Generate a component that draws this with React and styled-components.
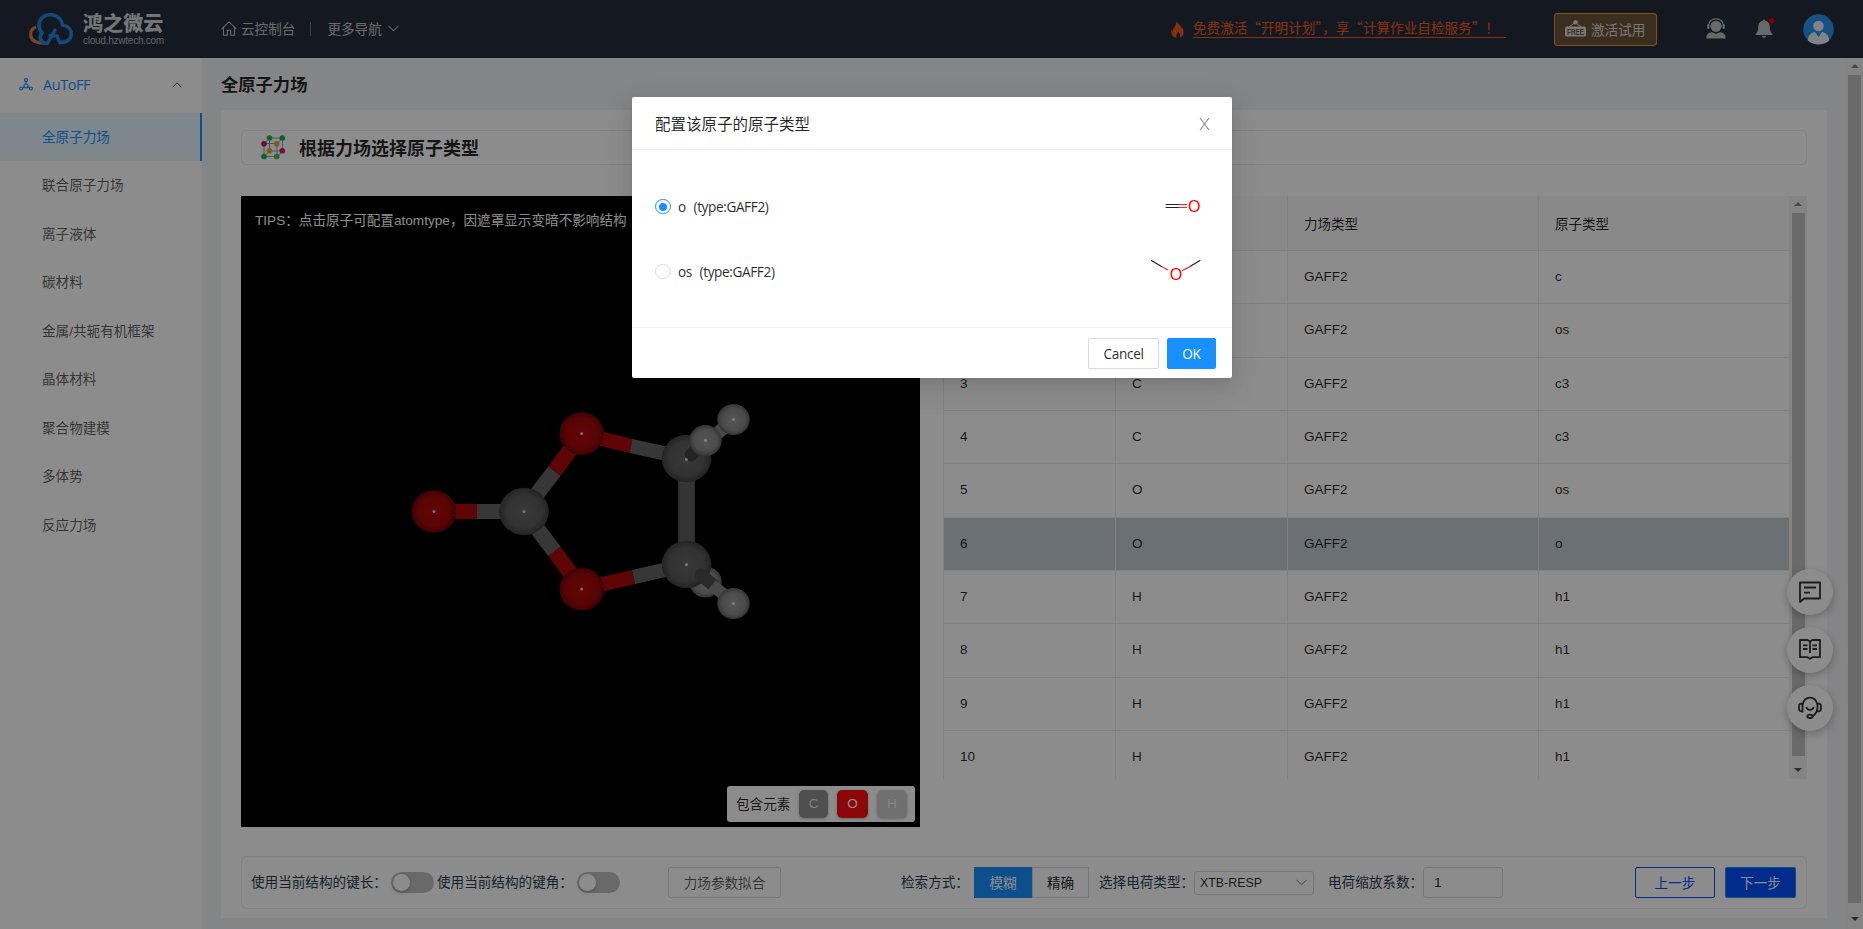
import React from "react";
import styled, { createGlobalStyle, css } from "styled-components";

const sans = `"Liberation Sans", "Noto Sans CJK SC", sans-serif`;
const humanist = `"Open Sans", "Noto Sans CJK SC", sans-serif`;

const GlobalStyle = createGlobalStyle`
  *, *::before, *::after { box-sizing: border-box; }
  html, body { margin: 0; padding: 0; overflow: hidden; }
  body { font-family: ${sans}; font-size: 13.6px; color: rgba(0, 0, 0, 0.85); background: #f0f2f5; }
  svg { display: block; flex: none; }
  button { font-family: inherit; }
`;

const Page = styled.div`
  position: relative;
  width: 1863px;
  height: 929px;
  display: flex;
  flex-direction: column;
  overflow: hidden;
  white-space: nowrap;
`;

/* ---------- header ---------- */
const Header = styled.header`
  flex: none;
  height: 58px;
  background: #262f3c;
  display: flex;
  align-items: center;
  padding: 0 29px 0 28px;
  color: #c4c6c8;
  font-family: ${humanist};
`;
const Brand = styled.div`
  display: flex;
  align-items: center;
  gap: 8px;
  width: 193px;
`;
const BrandText = styled.div`
  display: flex;
  flex-direction: column;
  padding-top: 1px;
`;
const BrandName = styled.span`
  font: 900 20px/22px "Noto Sans CJK SC", sans-serif;
  letter-spacing: 0.1px;
  color: #d4d6d8;
`;
const BrandUrl = styled.span`
  font: 10.2px/13px "Liberation Sans", sans-serif;
  letter-spacing: -0.33px;
  color: #b0b3b8;
`;
const NavLink = styled.a`
  display: flex;
  align-items: center;
  gap: ${(p) => p.$gap}px;
  line-height: 20px;
  padding-bottom: 1px;
  color: #c0c2c5;
`;
const NavDivider = styled.i`
  width: 1px;
  height: 14px;
  margin: 0 16px 0 15px;
  background: #6f767f;
`;
const Spacer = styled.div`
  flex: 1;
`;
const Promo = styled.a`
  display: flex;
  align-items: center;
  gap: 9px;
  margin-right: 48px;
  color: #f2581c;
`;
const PromoText = styled.span`
  width: 313px;
  height: 21px;
  font: 13.6px/20px "Noto Sans CJK SC", sans-serif;
  border-bottom: 1px solid #f2581c;
  margin-bottom: 8px;
  margin-top: 5px;
`;
const TrialButton = styled.button`
  display: flex;
  align-items: center;
  gap: 5px;
  width: 103px;
  height: 33px;
  padding: 0 10px 1px;
  border: 1px solid #f29423;
  border-radius: 3px;
  background: #6b553c;
  color: #dcd9d4;
  font-size: 13.6px;
  margin-right: 49px;
`;
const HeaderIcon = styled.div`
  margin-right: ${(p) => p.$gap || 0}px;
  padding-bottom: 1px;
`;

/* ---------- layout ---------- */
const Body = styled.div`
  flex: 1;
  display: flex;
  min-height: 0;
`;
const Sidebar = styled.aside`
  width: 202px;
  flex: none;
  background: #fff;
`;
const MenuTitle = styled.div`
  height: 55px;
  display: flex;
  align-items: center;
  padding: 0 20px 2px 19px;
  color: #1890ff;
  font: 14.4px ${humanist};
  span { flex: 1; padding-left: 10px; letter-spacing: -0.4px; }
`;
const MenuItem = styled.div`
  height: 48px;
  margin-bottom: 0.5px;
  padding: 0 0 3px 42px;
  display: flex;
  align-items: center;
  color: rgba(0, 0, 0, 0.65);
  ${(p) =>
    p.$active &&
    css`
      color: #1890ff;
      background: #e6f7ff;
      border-right: 2px solid #1890ff;
    `}
`;
const Main = styled.main`
  flex: 1;
  padding: 0 19px 0 19px;
`;
const PageTitle = styled.h1`
  margin: 0;
  height: 52px;
  font-size: 17.3px;
  line-height: 55px;
  font-weight: 700;
`;
const Card = styled.section`
  height: 808px;
  background: #fff;
  padding: 20px;
`;
const StepBar = styled.div`
  height: 35px;
  border: 1px solid #ebebeb;
  border-radius: 5px;
  display: flex;
  align-items: center;
  padding-left: 19px;
  gap: 14px;
  font-size: 18px;
  font-weight: 700;
  span { padding-bottom: 2px; }
`;
const Workspace = styled.div`
  margin-top: 31px;
  display: flex;
  gap: 23px;
  height: 631px;
`;
const Viewer = styled.div`
  position: relative;
  width: 679px;
  background: #000;
`;
const Tip = styled.div`
  padding: 14px 14px 0;
  line-height: 22px;
  color: #fff;
`;
const MoleculeSvg = styled.svg`
  position: absolute;
  left: 0;
  top: 0;
`;
const Legend = styled.div`
  position: absolute;
  right: 5px;
  bottom: 5px;
  width: 188px;
  height: 36px;
  border-radius: 3px;
  background: #fff;
  padding: 0 8px 0 9px;
  display: flex;
  align-items: center;
  justify-content: space-between;
`;
const LegendTitle = styled.span`
  padding-bottom: 2px;
`;
const Chip = styled.span`
  width: ${(p) => p.$w}px;
  height: 28px;
  padding-bottom: 2px;
  border-radius: 5px;
  background: ${(p) => p.$bg};
  color: ${(p) => p.$fg};
  box-shadow: 0 1px 3px rgba(0, 0, 0, 0.25);
  display: flex;
  align-items: center;
  justify-content: center;
`;

/* ---------- table ---------- */
const TableArea = styled.div`
  width: 864px;
  height: 583px;
  display: flex;
  overflow: hidden;
`;
const Table = styled.div`
  width: 846px;
  flex: none;
`;
const Row = styled.div`
  display: grid;
  grid-template-columns: 172px 172px 251px 251px;
  height: ${(p) => (p.$head ? 55 : 53.33)}px;
  background: ${(p) => (p.$head ? "#fafafa" : p.$selected ? "#c3ccd6" : "#fff")};
`;
const Cell = styled.div`
  padding: 0 16px 1px;
  display: flex;
  align-items: center;
  font-size: 13.5px;
  border-left: 1px solid #ececec;
  border-bottom: 1px solid #ececec;
`;
const Scrollbar = styled.div`
  flex: none;
  width: ${(p) => p.$w}px;
  background: #f1f1f1;
  display: flex;
  flex-direction: column;
  align-items: center;
  padding: 6px 0;
`;
const Thumb = styled.div`
  width: 13px;
  height: ${(p) => p.$h}px;
  margin: ${(p) => p.$m};
  background: #c1c1c1;
`;
const Arrow = styled.i`
  border: 4px solid transparent;
  ${(p) =>
    p.$up
      ? css`border-top: 0; border-bottom: 4px solid #858585;`
      : css`border-bottom: 0; border-top: 4px solid #505050;`}
`;

/* ---------- bottom bar ---------- */
const ActionBar = styled.div`
  margin-top: 29px;
  height: 53px;
  border: 1px solid #ebebeb;
  border-radius: 6px;
  display: flex;
  align-items: center;
  padding: 0 10px 0 9px;
`;
const Label = styled.span`
  width: ${(p) => p.$w}px;
  color: #2c3e50;
  padding-bottom: 3px;
`;
const Switch = styled.span`
  width: 43px;
  height: 21px;
  border-radius: 11px;
  background: rgba(0, 0, 0, 0.25);
  padding: 2px;
  margin: 0 ${(p) => p.$mr}px 0 0;
  &::before {
    content: "";
    display: block;
    width: 17px;
    height: 17px;
    border-radius: 50%;
    background: #fff;
    box-shadow: 0 2px 4px rgba(0, 35, 11, 0.2);
  }
`;
const Button = styled.button`
  width: ${(p) => p.$w}px;
  height: 31px;
  padding: 0 0 2px;
  font-size: 13.6px;
  border: 1px solid ${(p) => p.$border || "#d9d9d9"};
  border-radius: ${(p) => p.$radius ?? 2}px;
  background: ${(p) => p.$bg || "#fff"};
  color: ${(p) => p.$fg || "rgba(0,0,0,.85)"};
  margin-right: ${(p) => p.$mr || 0}px;
`;
const Select = styled.div`
  width: 120px;
  height: 24px;
  border: 1px solid #d9d9d9;
  border-radius: 3px;
  padding: 0 6px 0 5px;
  display: flex;
  align-items: center;
  justify-content: space-between;
  font-size: 12.4px;
  margin-right: 14px;
`;
const NumberField = styled.div`
  width: 80px;
  height: 31px;
  border: 1px solid #d9d9d9;
  border-radius: 3px;
  padding-left: 10px;
  display: flex;
  align-items: center;
`;

/* ---------- floating buttons ---------- */
const FloatStack = styled.div`
  position: absolute;
  left: 1787px;
  top: 569px;
  display: flex;
  flex-direction: column;
  gap: 12px;
`;
const FloatButton = styled.div`
  width: 46px;
  height: 46px;
  border-radius: 50%;
  background: #fff;
  box-shadow: 0 3px 9px rgba(0, 0, 0, 0.25);
  display: flex;
  align-items: center;
  justify-content: center;
`;

/* ---------- dialog ---------- */
const Mask = styled.div`
  position: absolute;
  inset: 0;
  background: rgba(0, 0, 0, 0.45);
  display: flex;
  justify-content: center;
  align-items: flex-start;
  padding: 97px 0 0 1px;
`;
const Dialog = styled.div`
  width: 600px;
  height: 281px;
  background: #fff;
  border-radius: 2px;
  box-shadow: 0 3px 6px -4px rgba(0, 0, 0, 0.12), 0 6px 16px rgba(0, 0, 0, 0.08),
    0 9px 28px 8px rgba(0, 0, 0, 0.05);
  display: flex;
  flex-direction: column;
  font-family: ${humanist};
`;
const DialogHead = styled.div`
  height: 53px;
  border-bottom: 1px solid #f0f0f0;
  padding: 1px 22px 0 23px;
  display: flex;
  align-items: center;
  justify-content: space-between;
  font-size: 15.5px;
`;
const DialogBody = styled.div`
  flex: 1;
  padding: 24px 30px 0 23px;
`;
const Option = styled.div`
  height: 65px;
  display: flex;
  align-items: center;
`;
const Radio = styled.span`
  width: 15.5px;
  height: 15.5px;
  border-radius: 50%;
  border: 1px solid ${(p) => (p.$on ? "#1890ff" : "#d9d9d9")};
  display: flex;
  align-items: center;
  justify-content: center;
  margin-right: 7.5px;
  &::after {
    content: "";
    width: 8px;
    height: 8px;
    border-radius: 50%;
    background: ${(p) => (p.$on ? "#1890ff" : "transparent")};
  }
`;
const OptionText = styled.span`
  flex: 1;
  white-space: pre;
  letter-spacing: -0.38px;
  word-spacing: 0.7px;
`;
const DialogFoot = styled.div`
  height: 51px;
  border-top: 1px solid #f0f0f0;
  display: flex;
  align-items: center;
  justify-content: flex-end;
  gap: 8px;
  padding: 0 16px 0 0;
  button { padding: 0; letter-spacing: -0.3px; }
`;

/* ---------- drawings ---------- */
const Chevron = ({ up, size = 10, color }) => (
  <svg width={size} height={size * 0.6} viewBox="0 0 10 6" fill="none" stroke={color} strokeWidth="1">
    <path d={up ? "M.5 5.3 5 .8 9.5 5.3" : "M.5.7 5 5.2 9.5.7"} />
  </svg>
);
const Logo = () => (
  <svg width="47" height="34" viewBox="0 0 47 34" fill="none">
    <path d="M8 15C4 16.500 2.300 20 2.700 23.500 3.400 28 7 31 15.500 31" stroke="#e3793a" strokeWidth="3.200" />
    <path d="M20 31.300H16.500C12 29 10.800 24.500 14 21 9.500 15 10.500 9 14.500 5.500 19 1.500 27 2 31 6 33 8 34.200 10.500 34.500 13 40.500 14 43.500 18 43.200 22.500 42.500 28 38 31 31.500 30.300" stroke="#2586e4" strokeWidth="3.600" />
    <path d="M27.800 17 18.800 32.500M20.500 23.800H29L32.500 32" stroke="#2586e4" strokeWidth="3.200" />
  </svg>
);
const Home = () => (
  <svg width="16" height="15" viewBox="0 0 16 15" fill="none" stroke="#c0c2c5" strokeWidth="1.100">
    <path d="M.7 7.800 8 .9l7.300 6.900M2.500 6.500v7.800h3.800V9.200h3.400v5.100h3.800V6.500" />
  </svg>
);
const Flame = () => (
  <svg width="13" height="17" viewBox="0 0 13 17">
    <path fill="#f2581c" d="M5.500 0c1.200 3 5.200 4.500 5.400 8l.9-1.400c1.600 4.600 1 8.800-3.300 10.400 1.400-2.600.6-4.800-1.400-6.800-.1 2-2.500 3.200-1.700 6.900C1.300 16-.4 12 .6 8.600l1.300 1.600C1.700 6 6 5 5.500 0Z" />
  </svg>
);
const FreeSign = () => (
  <svg width="21" height="17" viewBox="0 0 21 17">
    <circle cx="10.500" cy="2.300" r="2.200" fill="#dcd9d4" />
    <path d="M4 7l6-4.500L16.500 7" stroke="#dcd9d4" fill="none" />
    <rect x="0" y="6.500" width="21" height="10" rx="1.500" fill="#dcd9d4" />
    <text x="10.500" y="14.700" textAnchor="middle" textLength="17" lengthAdjust="spacingAndGlyphs" fontFamily="Liberation Sans" fontWeight="700" fontSize="8.500" fill="#6b553c">FREE</text>
  </svg>
);
const Agent = () => (
  <svg width="20" height="21" viewBox="0 0 20 21" fill="#bcc0c2">
    <circle cx="10" cy="8.300" r="5.600" />
    <path d="M2.600 9V7.500C3 3 6 .9 10 .9s7 2.100 7.400 6.600V9" fill="none" stroke="#bcc0c2" strokeWidth="1.100" />
    <rect x="1.200" y="6" width="2.200" height="5" rx="1.100" /><rect x="16.600" y="6" width="2.200" height="5" rx="1.100" />
    <path d="M.3 20.500c0-4 2-5.700 5.500-6.200l4.200 1.400 4.200-1.400c3.500.5 5.500 2.200 5.500 6.200z" />
  </svg>
);
const Bell = () => (
  <svg width="22" height="21" viewBox="0 0 22 21">
    <path fill="#bcc0c2" d="M8 2.500c.3-1.500 1.700-1.500 2 0 3.400.9 4.800 3.500 4.800 6.500 0 3.500.7 5 2.700 7.300v.7H.5v-.7C2.500 14 3.200 12.500 3.200 9c0-3 1.400-5.600 4.800-6.500ZM6.800 18h4.400c-.4 2.200-4 2.200-4.400 0Z" />
    <circle cx="16.700" cy="3" r="2.700" fill="#f00000" />
  </svg>
);
const Avatar = () => (
  <svg width="31" height="31" viewBox="0 0 31 31">
    <circle cx="15.500" cy="15.500" r="15.200" fill="#2b93ee" />
    <circle cx="15.500" cy="12" r="5.300" fill="#e8eef4" />
    <path d="M4.800 26.500c.3-5 2.700-7.500 7.200-8.800l3.500 5.500 3.500-5.500c4.500 1.300 6.900 3.800 7.200 8.800-5.500 5-15.900 5-21.400 0Z" fill="#e8eef4" />
  </svg>
);
const Tripod = () => (
  <svg width="14" height="13" viewBox="0 0 14 13" fill="none" stroke="#1890ff" strokeWidth="1.200">
    <circle cx="7" cy="2.200" r="1.500" /><circle cx="7" cy="8" r="2" /><circle cx="2.100" cy="10.500" r="1.500" /><circle cx="11.900" cy="10.500" r="1.500" />
    <path d="M7 3.700V6M5.400 9.200l-2 .7M8.600 9.200l2 .7" />
  </svg>
);
const Lattice = () => (
  <svg width="24" height="25" viewBox="0 0 24 25" fill="none">
    <path d="M8.500 3h13v13h-13zM3 8.500h13v13H3zM3 8.500 8.500 3M16 8.500 21.500 3M3 21.500 8.500 16M16 21.500l5.500-5.500" stroke="#69a7e8" strokeWidth="1" />
    {[[8.500, 3, "#3fae35"], [21.300, 3, "#19ab4c"], [3, 8.700, "#d8125c"], [15.700, 8.700, "#e6ab12"], [8.500, 15.800, "#e6ab12"], [21.300, 15.800, "#d8125c"], [3, 21.500, "#19b04c"], [15.700, 21.500, "#3fbe35"]].map(([x, y, c]) => (
      <circle key={`${x}-${y}`} cx={x} cy={y} r="2.800" fill={c} />
    ))}
  </svg>
);

const atomRadius = { C: 24.8, O: 22.3, H: 16.2 };
const Atom = ({ x, y, el, glint = true }) => (
  <g>
    <ellipse cx={x} cy={y} rx={atomRadius[el]} ry={atomRadius[el] * 0.955} fill={`url(#atom${el})`} />
    {glint && <circle cx={x} cy={y} r="1.500" fill="#fff" opacity=".75" />}
  </g>
);
const Bond = ({ a, b, mid, ca, cb, w = 15.500 }) => (
  <g strokeWidth={w}>
    <line x1={a[0]} y1={a[1]} x2={mid[0]} y2={mid[1]} stroke={ca} />
    <line x1={mid[0]} y1={mid[1]} x2={b[0]} y2={b[1]} stroke={cb} />
  </g>
);
const RED = "#b00a0a";
const GREY = "#656565";
const Molecule = () => (
  <MoleculeSvg width="679" height="631" viewBox="241 196 679 631">
    <defs>
      <radialGradient id="atomC"><stop offset="0" stopColor="#686868" /><stop offset=".7" stopColor="#5c5c5c" /><stop offset="1" stopColor="#414141" /></radialGradient>
      <radialGradient id="atomO"><stop offset="0" stopColor="#b40b0b" /><stop offset=".7" stopColor="#a30909" /><stop offset="1" stopColor="#700505" /></radialGradient>
      <radialGradient id="atomH"><stop offset="0" stopColor="#9c9c9c" /><stop offset=".7" stopColor="#8a8a8a" /><stop offset="1" stopColor="#606060" /></radialGradient>
    </defs>
    <Bond a={[434, 511.500]} b={[524, 511.500]} mid={[477, 511.500]} ca={RED} cb={GREY} w={15} />
    <Bond a={[524, 511]} b={[582, 434]} mid={[554.500, 471]} ca={GREY} cb={RED} />
    <Bond a={[524, 511]} b={[582, 589]} mid={[554.500, 551.500]} ca={GREY} cb={RED} />
    <Bond a={[582, 434]} b={[686, 458]} mid={[631, 446]} ca={RED} cb={GREY} w={14.500} />
    <Bond a={[582, 589]} b={[686, 565]} mid={[633.500, 577]} ca={RED} cb={GREY} w={14.500} />
    <Bond a={[686.500, 459]} b={[686.500, 564]} mid={[686.500, 511]} ca="#606060" cb="#606060" w={16.500} />
    <Atom x={434} y={511.500} el="O" /><Atom x={524} y={511.500} el="C" />
    <Atom x={581.700} y={433.500} el="O" /><Atom x={581.700} y={589} el="O" />
    <Atom x={686.500} y={458.500} el="C" />
    <Bond a={[697, 451]} b={[734, 419]} mid={[712, 438]} ca="#555" cb="#858585" w={13} />
    <line x1="691" y1="455" x2="705" y2="441" stroke="#434343" strokeWidth="13" strokeLinecap="round" />
    <Atom x={733.500} y={419.500} el="H" /><Atom x={705.500} y={440.500} el="H" />
    <circle cx="686.500" cy="459.500" r="1.500" fill="#fff" opacity=".7" />
    <Atom x={705.500} y={582} el="H" glint={false} />
    <Atom x={686.500} y={564.500} el="C" />
    <line x1="701" y1="575" x2="713" y2="585" stroke="#4d4d4d" strokeWidth="13" strokeLinecap="round" />
    <line x1="712" y1="585" x2="733" y2="602" stroke="#858585" strokeWidth="12" />
    <Atom x={733.500} y={603.500} el="H" />
  </MoleculeSvg>
);

const Chat = () => (
  <svg width="24" height="24" viewBox="0 0 24 24" fill="none" stroke="#333" strokeWidth="1.800" strokeLinejoin="round">
    <path d="M2 2.500h20v16H6l-4 3.500zM6 7.500h12M6 12.700h6" />
  </svg>
);
const Book = () => (
  <svg width="24" height="24" viewBox="0 0 24 24" fill="none" stroke="#333" strokeWidth="1.800" strokeLinejoin="round">
    <path d="M2 2h7.500L12 3.500 14.500 2H22v17.200h-7.500L12 20.700l-2.500-1.500H2zM12 3.500V15M5 7.300h4.500M5 11h4.500M14.500 7.300H19M14.500 11H19" />
  </svg>
);
const Headset = () => (
  <svg width="24" height="24" viewBox="0 0 24 24" fill="none" stroke="#333" strokeWidth="1.800">
    <path d="M4.500 15.500V9C5.500 4 8.500 1.700 12 1.700s6.500 2.300 7.500 7.300c.5 5-1.500 9-5 11.300M4.500 7.500C1 7.500 1 9 1 11.500s0 4 3.500 4zM19.500 7.500C23 7.500 23 9 23 11.500s0 4-3.500 4M8.300 11c1.200 3.800 6.200 3.800 7.400 0" />
    <ellipse cx="12" cy="20.300" rx="2.700" ry="1.700" />
  </svg>
);
const Carbonyl = () => (
  <svg width="60" height="50" viewBox="1142 182 60 50">
    <defs>
      <linearGradient id="bondFade" gradientUnits="userSpaceOnUse" x1="1165" x2="1187" y1="0" y2="0"><stop offset=".55" stopColor="#222" /><stop offset=".7" stopColor="#f22" /></linearGradient>
    </defs>
    <path d="M1165.500 204.500h21.500M1165.500 207.500h21.500" stroke="url(#bondFade)" strokeWidth="1.200" />
    <text x="1194.200" y="211.800" textAnchor="middle" fontFamily="Liberation Sans" fontSize="16" fill="#f00">O</text>
  </svg>
);
const Ether = () => (
  <svg width="60" height="50" viewBox="1142 247 60 50">
    <path d="M1151 260.200 1162 266.800M1200.300 260.200 1190 266.600" stroke="#222" strokeWidth="1.200" />
    <path d="M1162 266.800 1168 270M1190 266.600 1182 270.800" stroke="#f22" strokeWidth="1.200" />
    <text x="1176" y="279.700" textAnchor="middle" fontFamily="Liberation Sans" fontSize="16" fill="#f00">O</text>
  </svg>
);

const menu = ["全原子力场", "联合原子力场", "离子液体", "碳材料", "金属/共轭有机框架", "晶体材料", "聚合物建模", "多体势", "反应力场"];
const atoms = [
  ["C", "c"], ["O", "os"], ["C", "c3"], ["C", "c3"], ["O", "os"],
  ["O", "o"], ["H", "h1"], ["H", "h1"], ["H", "h1"], ["H", "h1"],
];

export default function App() {
  return (
    <Page>
      <GlobalStyle />
      <Header>
        <Brand>
          <Logo />
          <BrandText>
            <BrandName>鸿之微云</BrandName>
            <BrandUrl>cloud.hzwtech.com</BrandUrl>
          </BrandText>
        </Brand>
        <NavLink $gap={4}><Home />云控制台</NavLink>
        <NavDivider />
        <NavLink $gap={6}>更多导航<Chevron color="#a9acb0" size={11} /></NavLink>
        <Spacer />
        <Promo>
          <Flame />
          <PromoText>免费激活“开明计划”，享“计算作业自检服务”！</PromoText>
        </Promo>
        <TrialButton><FreeSign />激活试用</TrialButton>
        <HeaderIcon $gap={29}><Agent /></HeaderIcon>
        <HeaderIcon $gap={26}><Bell /></HeaderIcon>
        <Avatar />
      </Header>

      <Body>
        <Sidebar>
          <MenuTitle>
            <Tripod />
            <span>AuToFF</span>
            <Chevron up color="#555" />
          </MenuTitle>
          {menu.map((m, i) => (
            <MenuItem key={m} $active={i === 0}>{m}</MenuItem>
          ))}
        </Sidebar>

        <Main>
          <PageTitle>全原子力场</PageTitle>
          <Card>
            <StepBar><Lattice /><span>根据力场选择原子类型</span></StepBar>
            <Workspace>
              <Viewer>
                <Molecule />
                <Tip>TIPS：点击原子可配置atomtype，因遮罩显示变暗不影响结构</Tip>
                <Legend>
                  <LegendTitle>包含元素</LegendTitle>
                  <Chip $w={29} $bg="#909090" $fg="#e8e8e8">C</Chip>
                  <Chip $w={31} $bg="#ff0d0d" $fg="#fff">O</Chip>
                  <Chip $w={30} $bg="#cccccc" $fg="#f2f2f2">H</Chip>
                </Legend>
              </Viewer>
              <TableArea>
                <Table>
                  <Row $head>
                    <Cell /><Cell /><Cell>力场类型</Cell><Cell>原子类型</Cell>
                  </Row>
                  {atoms.map(([el, type], i) => (
                    <Row key={i} $selected={i === 5}>
                      <Cell>{i + 1}</Cell><Cell>{el}</Cell><Cell>GAFF2</Cell><Cell>{type}</Cell>
                    </Row>
                  ))}
                </Table>
                <Scrollbar $w={18}><Arrow $up /><Thumb $h={543} $m="7px 0 12px" /><Arrow /></Scrollbar>
              </TableArea>
            </Workspace>
            <ActionBar>
              <Label $w={140}>使用当前结构的键长：</Label>
              <Switch $mr={3} />
              <Label $w={140}>使用当前结构的键角：</Label>
              <Switch $mr={48} />
              <Button $w={113} $radius={3} $fg="rgba(0,0,0,.65)" $mr={120}>力场参数拟合</Button>
              <Label $w={73}>检索方式：</Label>
              <Button $w={58} $bg="#1890ff" $border="#1890ff" $fg="#fff" $radius={0}>模糊</Button>
              <Button $w={57} $radius={0} $mr={10}>精确</Button>
              <Label $w={95}>选择电荷类型：</Label>
              <Select>XTB-RESP<Chevron color="#aaa" size={11} /></Select>
              <Label $w={95}>电荷缩放系数：</Label>
              <NumberField>1</NumberField>
              <Spacer />
              <Button $w={80} $border="#0551fe" $fg="#0551fe" $mr={10}>上一步</Button>
              <Button $w={71} $bg="#0551fe" $border="#1890ff" $fg="#fff">下一步</Button>
            </ActionBar>
          </Card>
        </Main>
        <Scrollbar $w={17}><Arrow $up /><Thumb $h={828} $m="7px 0 14px" /><Arrow /></Scrollbar>
      </Body>

      <FloatStack>
        <FloatButton><Chat /></FloatButton>
        <FloatButton><Book /></FloatButton>
        <FloatButton><Headset /></FloatButton>
      </FloatStack>

      <Mask>
        <Dialog>
          <DialogHead>
            配置该原子的原子类型
            <svg width="11" height="14" viewBox="0 0 11 14" stroke="#8c8c8c" strokeWidth="1.200"><path d="M1 1l9 12M10 1 1 13" /></svg>
          </DialogHead>
          <DialogBody>
            <Option><Radio $on /><OptionText>{"o  (type:GAFF2)"}</OptionText><Carbonyl /></Option>
            <Option><Radio /><OptionText>{"os  (type:GAFF2)"}</OptionText><Ether /></Option>
          </DialogBody>
          <DialogFoot>
            <Button $w={71}>Cancel</Button>
            <Button $w={49} $bg="#1890ff" $border="#1890ff" $fg="#fff">OK</Button>
          </DialogFoot>
        </Dialog>
      </Mask>
    </Page>
  );
}
